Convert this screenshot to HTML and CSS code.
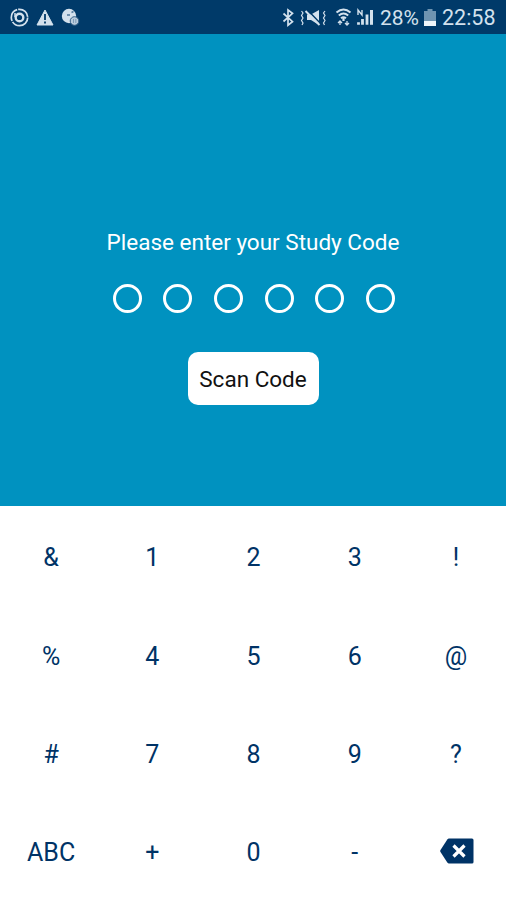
FILE: index.html
```html
<!DOCTYPE html>
<html lang="en">
<head>
    <meta charset="UTF-8">
    <meta name="viewport" content="width=device-width, initial-scale=1.0">
    <title>Study Code</title>
    <link rel="stylesheet" href="styles.css">
</head>
<body>

    <!-- Status bar -->
    <div id="statusBar">
        <svg width="80" height="34" viewBox="0 0 80 34" fill="none" stroke="#d3e1ed">
            <circle cx="19.5" cy="17.5" r="8.2" stroke-width="1.7" stroke-dasharray="21 1 14 1 13.5 1"/>
            <circle cx="19.5" cy="17.5" r="3.8" stroke-width="2.4"/>
            <path d="M15 13v4" stroke-width="1.5"/>
            <path d="M45 10L53 25H37Z" fill="#d3e1ed" stroke-width="1" stroke-linejoin="round"/>
            <path d="M45 14v6M45 21.5v2" stroke="#003a69" stroke-width="1.8"/>
            <circle cx="69" cy="16" r="7.2" fill="#d3e1ed" stroke="none"/>
            <path d="M67 15h3M71.500 12.500l2-1" stroke="#50779a" stroke-width="1.4"/>
            <circle cx="74.500" cy="21" r="4.300" fill="#b9cbdc" stroke="#315f88" stroke-width="1"/>
            <path d="M73.500 19v4M75.800 19v4" stroke="#7f9db8" stroke-width="1"/>
        </svg>
        <div class="statusRight">
            <svg width="96" height="34" viewBox="280 0 96 34" fill="none" stroke="#d3e1ed">
                <path d="M283.500 13.500l9 8.200-4.500 3.500V10l4.500 3.300-9 8.200" stroke-width="1.700"/>
                <path d="M301.500 11l1.500 2-1.500 2.500 1.500 2.500-1.500 2.500 1.500 2.500-1 2M325 11l-1.500 2 1.500 2.500-1.500 2.500 1.500 2.500-1.500 2.500 1 2" stroke-width="1.200"/>
                <path d="M307 14.500h4l8-4.500v15l-8-5h-4z" fill="#d3e1ed" stroke="none"/>
                <path d="M307.500 10L320 23" stroke="#003a69" stroke-width="1.600"/>
                <path d="M305.500 11L319.500 25" stroke-width="2"/>
                <path d="M336.500 12.500q7-6 14 0M338.800 15.500q4.700-4 9.400 0M341 18.200q2.500-2 5 0" stroke-width="2"/>
                <path d="M343.500 18v3" stroke-width="2.200"/>
                <path d="M338 23l2-2 2 2M340 21v4M345 23l2 2 2-2M347 21v4" stroke-width="1.300"/>
                <path d="M358 15V10l4 5v-5" stroke-width="1.400"/>
                <path d="M358.500 24.800v-2.500M362.500 24.800V19M367 24.800V14.500" stroke-width="2.800"/>
                <path d="M371.500 24.800V10" stroke-width="3"/>
            </svg>
            <span class="percent">28%</span>
            <svg class="battery" width="12" height="17" viewBox="0 0 12 17">
                <path d="M3.500 0h5v2H12v10H0V2h3.500z" fill="#6f94b1"/>
                <path d="M0 12h12v5H0z" fill="#eef5fa"/>
            </svg>
            <span class="clock">22:58</span>
        </div>
    </div>

    <!-- Code entry -->
    <div id="codePanel">
        <h1>Please enter your Study Code</h1>
        <div class="dots">
            <span class="dot"></span>
            <span class="dot"></span>
            <span class="dot"></span>
            <span class="dot"></span>
            <span class="dot"></span>
            <span class="dot"></span>
        </div>
        <button class="scanButton">Scan Code</button>
    </div>

    <!-- Keypad -->
    <div id="keypad">
        <button class="key">&amp;</button>
        <button class="key">1</button>
        <button class="key">2</button>
        <button class="key">3</button>
        <button class="key">!</button>

        <button class="key">%</button>
        <button class="key">4</button>
        <button class="key">5</button>
        <button class="key">6</button>
        <button class="key">@</button>

        <button class="key">#</button>
        <button class="key">7</button>
        <button class="key">8</button>
        <button class="key">9</button>
        <button class="key">?</button>

        <button class="key">ABC</button>
        <button class="key">+</button>
        <button class="key">0</button>
        <button class="key">-</button>
        <button class="key deleteKey" aria-label="Delete">
            <svg width="34" height="26" viewBox="0 0 34 26">
                <path d="M9 .5h23q1.500 0 1.500 1.500v22q0 1.500-1.500 1.500H9q-1 0-1.700-1L.5 14q-.6-1 0-2L7.300 1.500Q8 .5 9 .5z" fill="#003366"/>
                <path d="M13.500 7.500l11 11M24.500 7.500l-11 11" stroke="#fff" stroke-width="3.200"/>
            </svg>
        </button>
    </div>

</body>
</html>
```

FILE: styles.css
```css
body {
    font-family: Roboto, 'Liberation Sans', sans-serif;
    background-color: #ffffff;
    margin: 0;
    height: 900px;
    display: flex;
    flex-direction: column;
    overflow: hidden;
}

svg {
    display: block;
    flex-shrink: 0;
}

#statusBar {
    height: 34px;
    background: #003a69;
    color: #d3e1ed;
    display: flex;
    justify-content: space-between;
    font-size: 21.5px;
    line-height: 34px;
}

.statusRight {
    display: flex;
    align-items: center;
    padding-right: 11px;
}

.percent {
    margin-left: 4px;
    padding-top: 2px;
    width: 40px;
    font-size: 21px;
    white-space: nowrap;
}

.battery {
    margin-left: 4px;
}

.clock {
    margin-left: 6px;
    padding-top: 2px;
    width: 53px;
}

#codePanel {
    height: 472.6px;
    box-sizing: border-box;
    padding-top: 194px;
    background: #0092c0;
    display: flex;
    flex-direction: column;
    align-items: center;
}

h1 {
    margin: 0;
    color: #ffffff;
    font-size: 22.5px;
    font-weight: 400;
    line-height: 28px;
}

.dots {
    display: flex;
    gap: 21.6px;
    margin-top: 28px;
    padding-left: 1.5px;
}

.dot {
    width: 29px;
    height: 29px;
    box-sizing: border-box;
    border: 3px solid #ffffff;
    border-radius: 50%;
}

button {
    font-family: inherit;
    border: none;
    padding: 0;
    cursor: pointer;
}

.scanButton {
    width: 131px;
    height: 53px;
    margin-top: 39px;
    background: #ffffff;
    border-radius: 10px;
    color: #111111;
    font-size: 22.5px;
}

#keypad {
    display: grid;
    grid-template-columns: repeat(5, 1fr);
    grid-template-rows: repeat(4, 98.4px);
}

.key {
    display: flex;
    justify-content: center;
    align-items: center;
    padding: 4px 0 0 1px;
    background: none;
    color: #003366;
    font-size: 25px;
}

.deleteKey {
    padding: 0 0 0 3px;
}
```
